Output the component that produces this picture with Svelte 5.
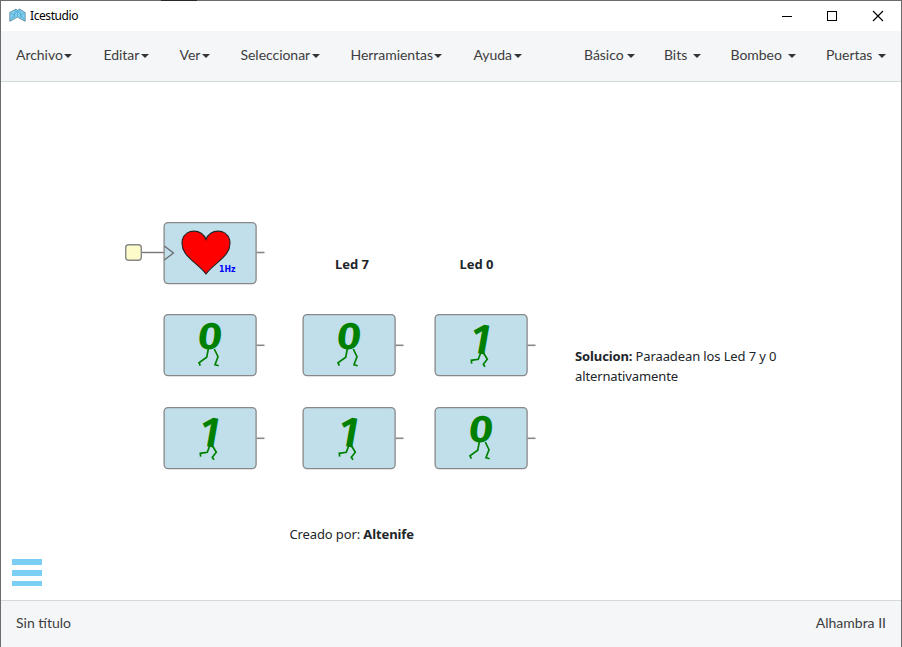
<script>
  const menus = [
    { label: 'Archivo', width: 87.5 },
    { label: 'Editar', width: 76 },
    { label: 'Ver', width: 61 },
    { label: 'Seleccionar', width: 110 },
    { label: 'Herramientas', width: 123 },
    { label: 'Ayuda', width: 60 }
  ];
  const collections = [
    { label: 'Básico', width: 80, text: 39.5 },
    { label: 'Bits', width: 66.5, text: 26 },
    { label: 'Bombeo', width: 95.5, text: 54 },
    { label: 'Puertas', width: 60, text: 49.5 }
  ];
  const blocks = [
    { kind: 'heart', x: 163, y: 222 },
    { kind: 'zero', x: 163, y: 314 },
    { kind: 'zero', x: 302, y: 314 },
    { kind: 'one', x: 434, y: 314 },
    { kind: 'one', x: 163, y: 407 },
    { kind: 'one', x: 302, y: 407 },
    { kind: 'zero', x: 434, y: 407 }
  ];
</script>

<div class="window">
  <header class="title">
    <svg class="logo" width="17" height="15" viewBox="0 0 17 15">
      <path d="M.8 4.5L7 1 8.5 2.5 10.5 1 16.2 4.5V13.3L11.5 10.8 8.5 9 5.5 10.8 .8 13.3Z" fill="#7bd0f2" stroke="#5f8494" stroke-width=".8" />
      <path d="M1 4.5L5.2 7V10.5M7 1L5.2 7 8.5 2.5V9M10.5 1L11.8 7 8.5 2.5M16 4.5L11.8 7V10.5M1 13L5.2 7M16 13L11.8 7" fill="none" stroke="#4f9fc2" stroke-width=".6" />
    </svg>
    <span class="name">Icestudio</span>
    <svg class="controls" width="110" height="20" viewBox="0 0 110 20" fill="none" stroke="#000">
      <path d="M0 10.5H10M45.5 5.5H54.5V14.5H45.5Z" shape-rendering="crispEdges" />
      <path d="M91 5L101 15M101 5L91 15" stroke-width="1.15" />
    </svg>
  </header>

  <nav>
    {#each menus as m}
      <div class="item" style:width="{m.width}px">
        <span>{m.label}</span><i class="caret"></i>
      </div>
    {/each}
    <div class="right">
      {#each collections as m}
        <div class="item" style:width="{m.width}px">
          <span style:width="{m.text}px">{m.label}</span><i class="caret"></i>
        </div>
      {/each}
    </div>
  </nav>

  <main>
    <svg class="input" style="left:124px;top:243px" width="41" height="19" viewBox="124 243 41 19">
      <path d="M141 252.5H165" stroke="#777" stroke-width="1.4" />
      <rect x="125.7" y="244.7" width="15.6" height="15.6" rx="3" fill="#fcfbca" stroke="#888" stroke-width="1.4" />
    </svg>
    {#each blocks as b}
      <svg class="block" style:left="{b.x}px" style:top="{b.y}px" width="103" height="63" viewBox="-.5 0 103 63">
        <path d="M93 {b.kind === 'heart' ? 30.5 : 31.3}H101" stroke="#888" stroke-width="1.6" />
        <rect x=".6" y=".6" width="92" height="61" rx="4" fill="#c0dfeb" stroke="#888" stroke-width="1.3" />
        {#if b.kind === 'heart'}
          <path d="M.8 24L10 31 .8 38" fill="none" stroke="#666" stroke-width="1.2" />
          <path d="M42.5 17.5C39 6.5 22 6 18.8 18C16 34 34 40 42.5 52C51 40 69 34 66.2 18C63 6 46 6.5 42.5 17.5Z" fill="#f00" stroke="#222" stroke-width="1.1" />
          <text class="hz" x="55.5" y="50" textLength="16.5" lengthAdjust="spacingAndGlyphs">1Hz</text>
        {:else if b.kind === 'zero'}
          <text class="digit zero" transform="translate(33 35.3) skewX(-6)">0</text>
          <path class="leg" d="M44.8 35L43.2 43.3 35.5 48.7 36.8 51.7M50.8 35L54.5 42.7 51.5 50.7 55.2 51.7" />
        {:else}
          <text class="digit one" transform="translate(33 37.6) rotate(10)">1</text>
          <path class="leg" d="M46.5 38L43.8 45.3 36.8 46.3 37.2 49.7M48.5 38L52.8 45.3 48.8 50.3 50.5 52.7" />
        {/if}
      </svg>
    {/each}
    <p class="note" style="left:335px;top:254px"><b>Led 7</b></p>
    <p class="note" style="left:459.5px;top:254px"><b>Led 0</b></p>
    <p class="note tight" style="left:575px;top:346px"><b>Solucion:</b> Paraadean los Led 7 y 0<br />alternativamente</p>
    <p class="note tight" style="left:289.5px;top:524px">Creado por: <b>Altenife</b></p>
    <div class="burger"><i></i><i></i><i></i></div>
  </main>

  <footer><span>Sin título</span><span>Alhambra II</span></footer>
</div>

<style>
  .window {
    position: relative;
    box-sizing: border-box;
    width: 902px;
    height: 647px;
    border: 1px solid #6b6b6b;
    border-bottom: 0;
    display: flex;
    flex-direction: column;
    background: #fff;
  }
  .window::before {
    content: '';
    position: absolute;
    left: 160px;
    top: -1px;
    width: 36px;
    height: 1px;
    background: #2b2528;
  }
  .title {
    height: 30px;
    flex: none;
    display: flex;
    align-items: center;
    padding: 0 16px 0 8px;
    box-sizing: border-box;
  }
  .logo { margin-top: -2px; }
  .name {
    font: 12px/16px 'Noto Sans', sans-serif;
    letter-spacing: -0.42px;
    margin-left: 4px;
    color: #000;
  }
  .controls { margin-left: auto; margin-right: -7px; }
  nav {
    height: 50px;
    flex: none;
    display: flex;
    align-items: center;
    padding-left: 15px;
    background: #f4f6f8;
    border-bottom: 1px solid #d3dcdd;
    font: 14px/20px Lato, sans-serif;
    color: #3d3d40;
  }
  .item { display: flex; align-items: center; flex: none; white-space: nowrap; }
  .item span { position: relative; top: -1px; letter-spacing: -0.04px; }
  .right { display: flex; margin-left: 50.5px; }
  .caret {
    border: 4px solid transparent;
    border-top-color: #333;
    border-bottom: 0;
    margin-left: 1.5px;
  }
  .right .caret { margin-left: 3px; }
  main { flex: 1; min-height: 0; }
  .input, .block, .note { position: absolute; margin: -1px 0 0 -1px; }
  .block { overflow: visible; }
  .note {
    font: 13px/20px 'Noto Sans', sans-serif;
    color: #212529;
    white-space: nowrap;
  }
  .tight { letter-spacing: -0.12px; }
  .digit { font-weight: 700; fill: green; }
  .zero { font-family: 'DejaVu Sans', sans-serif; font-size: 35.5px; }
  .one { font-family: 'Noto Sans', sans-serif; font-size: 41px; }
  .leg { fill: none; stroke: green; stroke-width: 1.7; }
  .hz { font: bold 8.8px 'DejaVu Sans', sans-serif; fill: #00f; }
  .burger {
    position: absolute;
    left: 11px;
    top: 558px;
    width: 30px;
    display: flex;
    flex-direction: column;
    gap: 5px;
  }
  .burger i { height: 6px; background: #7bcff4; }
  .burger i:last-child { height: 5px; }
  footer {
    height: 47px;
    box-sizing: border-box;
    flex: none;
    border-top: 1px solid #d3dadd;
    background: #f4f6f8;
    display: flex;
    justify-content: space-between;
    padding: 12px 15px 0;
    font: 14px/20px Lato, sans-serif;
    color: #3d3d40;
  }
</style>
